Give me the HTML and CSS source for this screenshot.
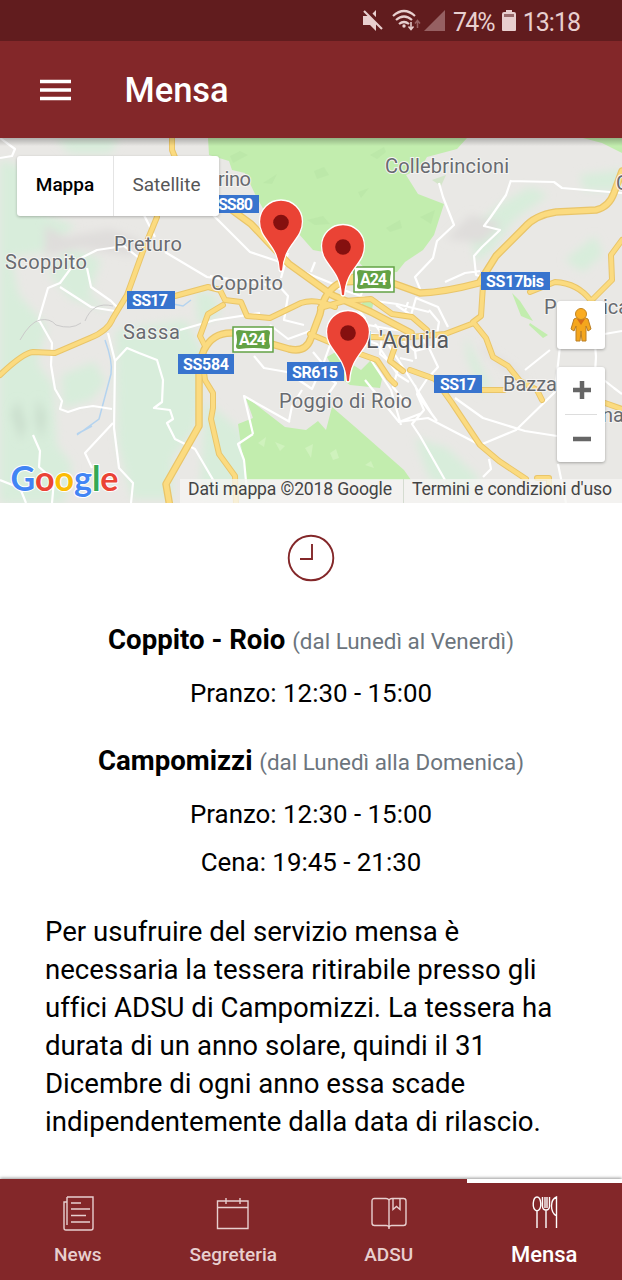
FILE: index.html
```html
<!DOCTYPE html>
<html lang="it">
<head>
<meta charset="utf-8">
<title>Mensa</title>
<link rel="stylesheet" href="styles.css">
</head>
<body>
<div class="app">
  <div class="status">
    <svg class="status-icons" viewBox="0 0 84 24" width="84" height="24">
      <path fill="#e8cfcf" d="M1 7h7l6-6v21l-6-6H1z"/>
      <path stroke="#611c1e" stroke-width="4" d="M3 0l20 20"/>
      <path stroke="#e8cfcf" stroke-width="2.200" d="M2 2l18 18"/>
      <g fill="none" stroke="#e8cfcf" stroke-width="2.2"><path d="M31 7q11-10 22 0M34 11q8-7 16 0M37 15q5-4 10 0"/><path stroke-width="1.5" d="M49 13v7M46.500 17.500l2.500 3 2.500-3"/></g>
      <circle cx="42" cy="17" r="1.700" fill="#e8cfcf"/>
      <path fill="none" stroke="#966062" stroke-width="1.500" d="M55.500 19v-7M53 14.500l2.500-3 2.500 3"/>
      <path fill="#966062" d="M83 1v21H62z"/>
    </svg>
    <span class="status-text battery-text">74%</span>
    <svg class="battery" viewBox="0 0 14 22" width="14" height="22"><path fill="#e8cfcf" d="M4 0h6v2h2q2 0 2 2v16q0 1-1 1H1q-1 0-1-1V4q0-2 2-2h2z"/><path fill="#99696b" d="M2 4h10v3H2z"/></svg>
    <span class="status-text">13:18</span>
  </div>
  <header class="toolbar">
    <svg class="menu" viewBox="0 0 32 22" width="32" height="22"><path stroke="#fff" stroke-width="3.500" d="M0 2.500h31M0 11h31M0 19.500h31"/></svg>
    <h1 class="title">Mensa</h1>
  </header>
  <section class="map">
    <svg class="map-canvas" viewBox="0 138 622 365" width="622" height="365">
      <defs>
        <linearGradient id="top" x1="0" y1="0" x2="0" y2="1"><stop offset="0" stop-color="#000" stop-opacity=".25"/><stop offset="1" stop-color="#000" stop-opacity="0"/></linearGradient>
        <filter id="soft"><feGaussianBlur stdDeviation="4"/></filter>
        <g id="pin"><path fill="#ea4335" stroke="#fff" stroke-width="1.300" d="M-1.700-1C-3-28-21.500-31-21.500-50a21.500 21.500 0 0 1 43 0C21.500-31 3-28 1.700-1Q0 1-1.700-1z"/><circle cy="-49" r="7.800" fill="#85100f"/></g>
      </defs>
      <path fill="#e9e8e5" d="M0 138h622v365H0z"/>
      <g fill="#d8eddb" filter="url(#soft)">
        <path d="M0 160l25 8 18 45 32 13-28 25-36 6 8 38 28 32-20 70 15 105H0z"/>
        <path d="M55 138h65l-10 15H70zM35 360l18 25 4 60 15 20-8 38H5V370zM62 375l32-13 12 20-15 18-28 8z"/>
        <path d="M116 330l70-10 18 35-8 72-24 32v40h-40l-14-55zM66 245l35 15-12 35 20 16-38-12-22-25zM205 400l35 30 30 65h-70z"/>
        <path d="M415 438l32 10 32 30-15 22-35-22zM470 230l30-25 30-18 18 8-34 25-22 30-16 12zM565 260l30-24 8 18-20 18zM580 175l42-5v20h-38zM465 335l25 50-8 10-15-38zM195 290l20 5 5 20-22 10z"/>
      </g>
      <g fill="#dfdddb" filter="url(#soft)"><path d="M45 225l20 12 45-8 32 12-10 15-52-8-35 8zM480 345l50 35-22-9-25-20zM590 420l10 20-10 8zM470 215l32 8-20 20-36-4z"/><path fill="#cbdfce" d="M18 400l8 24-5 18-10-28zM38 398l8 18-4 25-7-22z"/></g>
      <path fill="#c2edae" d="M208 138h259l-10 11-30 8-7 12-14 6 12 19 26 10-10 31-11 15-18 12-8 10-28 1-14-15-42-8-22-25-25-11-11-20-10-21-13-3-3-9-20-6z"/>
      <path fill="#c2edae" d="M245 396l40 31 21 3 12-9 8 9 6-23 22 19 50 44 7 10H246l-8-56 15-6z"/>
      <path fill="#c2edae" d="M327 357l12-7 11 13 11 7 12-12 9 21-2 9-30-3-14-10zM360 305l10-9 4 4-2 9zM512 293l8 8 13 20-12-5zM530 323l18 12-5 3-14-13zM583 138h39v15l-20-10z"/>
      <g fill="#b5e2a3" opacity=".4"><path d="M230 156l10-5 8 4-15 8zM263 183l14-9-5 10zM314 171l10-4 5 8-12 4zM358 192l11-4-8 10zM386 228l14-8 2 8-12 4zM307 220l16-4 7 8-15 1zM370 155l14-8 2 5-9 7zM432 180l14-5-5 11zM420 217l15-7-4 14z"/></g>
      <g fill="#cff2bd"><path d="M275 442l10 4-5 5zM305 448l8-4-2 14zM330 453l6-4 3 9-6 2zM258 443l8-6-2 10zM365 465l6-4 3 7z"/></g>
      <g fill="none" stroke="#b4d3ef" stroke-width="1.500"><path d="M105 340q8 22 6 34l-12 45-22 16M173 304l10 2 8-6M77 434l15-8"/></g>
      <g fill="none" stroke="#fff" stroke-width="2.200" stroke-linejoin="round">
        <path d="M0 138l15 11-3 7-12 2M143 213l12 24M165 252l42 25 15 2M60 287l31 20 5 1 19 3M38 322l10-34 12-5 17-23 20-10 27-4 15 12M87 268l4 19 20 14 8 8"/>
        <path d="M39 320l13 23-1 22 4 24 7 12-2 8 8 3 12-4 13-2 19 3M108 333l7 28-1 67 5 40 14 15-2 20M113 423l-28 30 7 15M33 435l7 16-1 16 15 13-2 23M0 480l20 8 6 15M115 361l12-13 12 5 18 7 6 20-1 22-8 6 16 2 3 9-6 4 8 16 20 10 24 41"/>
        <path d="M213 215l37 37 30 10 29 12 34 14M180 330l35-10 45-7M289 421l3-15 10-16M253 434l-15 10 6 16 3 32M253 434l-9-38 46 26M210 276l70 11 8 9-4 24 20 5M254 356l10 12 23 4 25 17 11-25-10-12M330 345l-10 28 16 10-9 13M270 325l18 14 22-8"/>
        <path d="M288 253l-7 25M315 262l-4 10M335 287l40 14 22 3 32 8M348 275l15 14-4 12M408 302l-3 9M420 289l-5-12 18-19 4-17 17-16-11-28-4-14M511 180l-5 15-16 23-6 8 16 4-18 17-8 9 2 19 10 3M510 181l44 1 8 6 60 5M445 282l20-9 15-2"/>
        <path d="M396 305l15 10 5-17 22 9 10 20M398 336l17 15 20-5 4-24-10-12M420 335l10 15 8 17-11 12-10 15 7 16-12 14 8 12 25 44M356 307l9 11-5 15 22 2-2 19 18 15-5 18 16 20M368 325l45 8 3 26M371 360l20 30 10 35M365 380l34 42 23-9M455 398l28 20 42 13 32 5M398 422l30-4 52 27 36-15 39-38 5-46 33-10 29-5M593 318l3 39-1 16 19 15 8 6M558 464l8 39M489 459l2 10-8 8"/>
        <path d="M375 324l40 62 18 30M352 335l25 9 21 31 11 7M550 350l-25 20M400 358l13 3M415 385l4 12 18 24"/>
      </g>
      <g fill="none" stroke="#cbcaca" stroke-width="1"><path d="M20 340q10-18 20-20t16 5q15 5 25-2M85 321q8-20 28-15"/></g>
      <g fill="none" stroke-linejoin="round" stroke-linecap="round">
        <g stroke="#e9c569" stroke-width="6">
          <path d="M172 138v12l7 17M157 217l-14 34-16 44-14 23q-5 13-23 20l-35 15-22-1q-10 1-33 23M150 300l25-4 33-9 12 3 5 10 16 2 6 14 23 2 31-15q14-5 34 4"/>
          <path stroke-width="7.500" d="M221 202l30 22 38 40 43 31 39 17 40 21M622 171l-8 22q-5 14-18 17l-40 2q-21 3-32 16l-28 28-17 27q-33 9-59 10l-25-9-33-5M385 280l-43 2q-18 8-22 32l-9 24q-5 15-22 11l-56-16q-20-1-29 17l-5 13v63l-33 58 5 29"/>
          <path d="M203 365l2 15 8 13v15l-2 11 8 35 16 22 1 27M310 334l36 15 31 11 12 18 6 6M410 370l25 9 17 24 28 42 19 16 27 18M482 390h22M605 403l17 6M340 282l20-8 14 7M400 338l45-4 29-11 12 15 7 19 15 9 12 15 17 9 5 10M483 285l-2 31-8 6M530 292l25-10q23 1 36 19l21-21-1-25 11-15M372 337l26 1-8 23 13 10M320 308l24-7 27-2 21 15 20 3 15 13"/>
          <path d="M205 346l-5-10 8-22 15-9M537 478h12v14"/>
        </g>
        <g stroke="#fbdb80" stroke-width="4">
          <path d="M172 138v12l7 17M157 217l-14 34-16 44-14 23q-5 13-23 20l-35 15-22-1q-10 1-33 23M150 300l25-4 33-9 12 3 5 10 16 2 6 14 23 2 31-15q14-5 34 4"/>
          <path stroke-width="5" d="M221 202l30 22 38 40 43 31 39 17 40 21M622 171l-8 22q-5 14-18 17l-40 2q-21 3-32 16l-28 28-17 27q-33 9-59 10l-25-9-33-5M385 280l-43 2q-18 8-22 32l-9 24q-5 15-22 11l-56-16q-20-1-29 17l-5 13v63l-33 58 5 29"/>
          <path d="M203 365l2 15 8 13v15l-2 11 8 35 16 22 1 27M310 334l36 15 31 11 12 18 6 6M410 370l25 9 17 24 28 42 19 16 27 18M482 390h22M605 403l17 6M340 282l20-8 14 7M400 338l45-4 29-11 12 15 7 19 15 9 12 15 17 9 5 10M483 285l-2 31-8 6M530 292l25-10q23 1 36 19l21-21-1-25 11-15M372 337l26 1-8 23 13 10M320 308l24-7 27-2 21 15 20 3 15 13"/>
          <path d="M205 346l-5-10 8-22 15-9M537 478h12v14"/>
        </g>
      </g>
      <g class="place">
        <text x="218" y="186" textLength="33">rino</text>
        <text x="385" y="172.500" textLength="124">Collebrincioni</text>
        <text x="114" y="250.500" textLength="68">Preturo</text>
        <text x="5" y="269" textLength="82">Scoppito</text>
        <text x="211" y="290" textLength="72">Coppito</text>
        <text x="123" y="339" textLength="57">Sassa</text>
        <text x="279" y="408" textLength="133">Poggio di Roio</text>
        <text x="503" y="391" textLength="54">Bazza</text>
        <text x="544" y="314">P</text><text x="603" y="314">ica</text>
        <text x="602" y="422">na</text><text x="616" y="190">C</text>
        <text class="city" x="366" y="348" textLength="83">L'Aquila</text>
      </g>
      <g class="shield">
        <path d="M219 195h40v18h-40zM127 291h48v18h-48zM178 354h56v20h-56zM287 362h57v19h-57zM481 272h69v18h-69zM434 375h48v18h-48z"/>
        <text x="218" y="210" textLength="35">SS80</text>
        <text x="132" y="306" textLength="36">SS17</text>
        <text x="183" y="370" textLength="46">SS584</text>
        <text x="292" y="378" textLength="46">SR615</text>
        <text x="486" y="287" textLength="58">SS17bis</text>
        <text x="440" y="390" textLength="36">SS17</text>
      </g>
      <g class="highway">
        <g><rect x="354" y="267" width="40" height="25" fill="#fff" stroke="#63a245" stroke-width="1.500"/><path fill="#63a245" d="M360 270q14 2 28 0 3 0 3 3-2 7 0 13 0 3-3 3-14-2-28 0-3 0-3-3 2-6 0-13 0-3 3-3z"/><text x="360" y="285" textLength="27">A24</text></g>
        <g><rect x="233" y="327" width="40" height="25" fill="#fff" stroke="#63a245" stroke-width="1.500"/><path fill="#63a245" d="M239 330q14 2 28 0 3 0 3 3-2 7 0 13 0 3-3 3-14-2-28 0-3 0-3-3 2-6 0-13 0-3 3-3z"/><text x="239" y="345" textLength="27">A24</text></g>
      </g>
      <use href="#pin" x="281" y="271.500"/><use href="#pin" x="343" y="296"/><use href="#pin" x="348" y="382"/>
      <path fill="url(#top)" d="M0 138h622v8H0z"/>
      <path fill="#f5f5f3" fill-opacity=".75" d="M180 479h442v24H180z"/><path stroke="#d5dcd1" d="M403.500 479v24"/>
      <text class="google" x="10.500" y="491" textLength="108" lengthAdjust="spacingAndGlyphs"><tspan fill="#4285f4">G</tspan><tspan fill="#ea4335">o</tspan><tspan fill="#fbbc05">o</tspan><tspan fill="#4285f4">g</tspan><tspan fill="#34a853">l</tspan><tspan fill="#ea4335">e</tspan></text>
      <text class="credit" x="188" y="495" textLength="204">Dati mappa ©2018 Google</text>
      <text class="credit" x="412" y="495" textLength="200">Termini e condizioni d'uso</text>
    </svg>
    <div class="map-type"><span class="type active">Mappa</span><span class="type">Satellite</span></div>
    <div class="controls">
      <div class="pegman"><svg viewBox="0 0 24 36" width="24" height="36"><path fill="#f5a61d" stroke="#ba7e24" d="M5 12q7-4 14 0l3 10-3 2-2-5v15h-4l-1-10-1 10H7V19l-2 5-3-2z"/><path fill="#d96c19" d="M8 12h8l-4 6z"/><circle cx="12" cy="7" r="5.500" fill="#fbac20" stroke="#c38521"/></svg></div>
      <div class="zoom"><svg viewBox="0 0 48 95" width="48" height="95"><path stroke="#666" stroke-width="4.500" d="M16 23h18M25 14v18M16 72h18"/><path stroke="#ddd" d="M8 47.500h32"/></svg></div>
    </div>
  </section>
  <main class="content">
    <svg class="clock" viewBox="0 0 48 48" width="48" height="48"><circle cx="24" cy="24" r="22.300" fill="none" stroke="#832729" stroke-width="1.900"/><path fill="none" stroke="#832729" stroke-width="1.900" d="M25 10v15H13"/></svg>
    <h2 class="place-name"><b>Coppito - Roio</b> <span class="days">(dal Lunedì al Venerdì)</span></h2>
    <p class="hours">Pranzo: 12:30 - 15:00</p>
    <h2 class="place-name second"><b>Campomizzi</b> <span class="days">(dal Lunedì alla Domenica)</span></h2>
    <p class="hours">Pranzo: 12:30 - 15:00</p>
    <p class="hours">Cena: 19:45 - 21:30</p>
    <p class="info">Per usufruire del servizio mensa è<br>necessaria la tessera ritirabile presso gli<br>uffici ADSU di Campomizzi. La tessera ha<br>durata di un anno solare, quindi il 31<br>Dicembre di ogni anno essa scade<br>indipendentemente dalla data di rilascio.</p>
  </main>
  <nav class="tabs">
    <div class="tab"><svg class="tab-icon" viewBox="-2 0 36 36"><path d="M5 2h26v31q0 2-2 2H4q-2 0-2-2V7h3M5 2v28M9 8h10M9 14h19M9 20.500h15M9 27h19"/></svg><span>News</span></div>
    <div class="tab"><svg class="tab-icon" viewBox="0 0 36 36"><path d="M2.500 6h30.500v27.500H2.500zM2.500 12.500H33M11 3v6M25 3v6"/></svg><span>Segreteria</span></div>
    <div class="tab"><svg class="tab-icon" viewBox="0 0 36 36"><path d="M18 5q-1-1.500-3-1.500H3.500q-2.500 0-2.500 2.500v22q0 2.500 2.500 2.500h12q2 0 2.500 2 .5-2 2.500-2h12q2.500 0 2.500-2.500V6q0-2.500-2.500-2.500H21q-2 0-3 1.500zv29M22 4v10.500l3.500-3 3.500 3V4"/></svg><span>ADSU</span></div>
    <div class="tab selected"><svg class="tab-icon" viewBox="-2 0 36 36"><path d="M9 16C3 14 5 2 9 2s6 12 0 14zv17M14.500 2v9q0 4 3.500 4t3.500-4V2M17 2v11M19 2v11M18 15v18M28.500 33V2q-5 2-5 9t5 10"/></svg><span>Mensa</span></div>
  </nav>
</div>
</body>
</html>
```
FILE: styles.css
```css
body { margin: 0; background: #fff; font-family: Roboto, sans-serif; }
.app { width: 622px; height: 1280px; display: flex; flex-direction: column; overflow: hidden; }
.status { height: 41px; box-sizing: border-box; padding: 1px 42px 0 0; background: #611c1e; color: #e8cfcf; display: flex; align-items: center; justify-content: flex-end; }
.status-icons { margin-right: 7px; }
.battery { margin: 0 7px 0 8px; }
.status-text { font-size: 25px; line-height: 40px; letter-spacing: -1px; padding-top: 3px; }
.battery-text { letter-spacing: -1.900px; }
.toolbar { height: 97px; background: #832729; color: #fff; display: flex; align-items: center; padding-left: 40px; box-sizing: border-box; }
.menu { margin-right: 52.500px; }
.title { margin: 0; font-size: 34.500px; font-weight: 500; line-height: 40px; }
.map { position: relative; height: 365px; flex: none; }
.map-canvas { display: block; }
.place text { font-size: 20px; fill: #686b70; stroke: #f5f4f2; stroke-width: 2px; paint-order: stroke; }
.place .city { font-size: 23px; fill: #55585c; }
.shield path { fill: #3874ce; }
.shield text, .highway text { fill: #fff; font-size: 16px; font-weight: 700; }
.google { font: 700 34.500px Lato, sans-serif; stroke: #fff; stroke-width: 2px; paint-order: stroke; }
.credit { font-size: 17.600px; fill: #444; }
.map-type { position: absolute; left: 17px; top: 18px; width: 202px; height: 60px; display: flex; background: #fff; border-radius: 3px; box-shadow: 0 1px 3px rgba(0,0,0,.25); }
.type { flex: 1; display: flex; align-items: center; justify-content: center; padding-bottom: 3px; font-size: 19px; color: #565656; }
.active { flex: none; width: 96px; font-weight: 500; color: #000; border-right: 1px solid #e4e4e4; }
.controls { position: absolute; right: 17px; top: 163px; display: grid; gap: 18px; }
.pegman, .zoom { width: 48px; background: #fff; border-radius: 3px; box-shadow: 0 1px 3px rgba(0,0,0,.3); display: flex; justify-content: center; align-items: center; }
.pegman { height: 48px; }
.zoom { height: 95px; }
.content { flex: 1; display: flex; flex-direction: column; align-items: center; padding-top: 31px; white-space: nowrap; }
.clock { margin-bottom: 34px; flex: none; }
.place-name { margin: 0 0 4px; font-size: 27.600px; line-height: 48px; font-weight: 400; }
.place-name b { font-weight: 700; }
.second { margin-top: 19px; }
.days { font-size: 22.400px; color: #6c757d; }
.hours { margin: 0; font-size: 25.900px; line-height: 48.700px; }
.info { width: 532px; margin: 25.500px 0 0; font-size: 27.600px; line-height: 38px; font-variant-ligatures: none; }
.tabs { height: 101px; flex: none; display: grid; grid-template-columns: repeat(4, 1fr); background: #832729; box-shadow: 0 -1px 3px rgba(0,0,0,.4); }
.tab { box-sizing: border-box; border-top: 4px solid transparent; padding-top: 12px; display: flex; flex-direction: column; align-items: center; color: #e8cfcf; font-size: 19px; line-height: 28px; font-weight: 500; }
.tab-icon { width: 36px; height: 36px; margin-bottom: 10px; fill: none; stroke: currentColor; stroke-width: 1.400; }
.selected { border-top-color: #fff; color: #fff; font-size: 22px; }
```
